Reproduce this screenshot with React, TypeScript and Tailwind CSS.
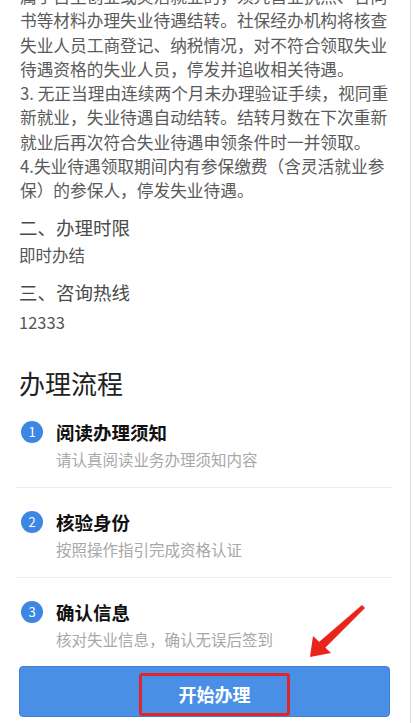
import React from "react";

const bodyLines = [
  "属于自主创业或灵活就业的，须凭营业执照、合同",
  "书等材料办理失业待遇结转。社保经办机构将核查",
  "失业人员工商登记、纳税情况，对不符合领取失业",
  "待遇资格的失业人员，停发并追收相关待遇。",
  "3. 无正当理由连续两个月未办理验证手续，视同重",
  "新就业，失业待遇自动结转。结转月数在下次重新",
  "就业后再次符合失业待遇申领条件时一并领取。",
  "4.失业待遇领取期间内有参保缴费（含灵活就业参",
  "保）的参保人，停发失业待遇。",
];

const steps = [
  { n: "1", title: "阅读办理须知", sub: "请认真阅读业务办理须知内容" },
  { n: "2", title: "核验身份", sub: "按照操作指引完成资格认证" },
  { n: "3", title: "确认信息", sub: "核对失业信息，确认无误后签到" },
];

export default function App() {
  return (
    <div
      className="relative w-[413px] h-[723px] overflow-hidden bg-white flex"
      style={{ fontFamily: '"Noto Sans CJK SC", "Noto Sans", sans-serif' }}
    >
      <div className="w-[410px] flex flex-col pl-[16px] pr-[18px]">
        <div className="-mt-[16px] pl-[4px] text-[16.7px] leading-[24.3px] text-[#5a5a5a] whitespace-nowrap">
          {bodyLines.map((l, i) => (
            <div key={i}>{l}</div>
          ))}
        </div>
        <div className="mt-[10px] pl-[3px] text-[18.5px] leading-[28px] text-[#4a4a4a]">二、办理时限</div>
        <div className="mt-[2px] pl-[3px] text-[16.5px] leading-[24px] text-[#555]">即时办结</div>
        <div className="mt-[11px] pl-[3px] text-[18.5px] leading-[28px] text-[#4a4a4a]">三、咨询热线</div>
        <div className="mt-[4px] pl-[3px] text-[16.5px] leading-[24px] text-[#555]">12333</div>
        <div className="mt-[34px] pl-[3px] text-[26px] leading-[30px] text-[#222]">办理流程</div>
        {steps.map((s, i) => (
          <div
            key={s.n}
            className={
              i < 2
                ? "flex pt-[21px] pb-[17px] border-b border-[#ececec]"
                : "flex pt-[21px] pb-[16px]"
            }
          >
            <div className="w-[40px] pl-[5px] pt-[2px]">
              <div className="w-[22px] h-[22px] rounded-full bg-[#3d87e3] flex items-center justify-center text-white text-[13px] leading-none">
                {s.n}
              </div>
            </div>
            <div className="flex flex-col gap-[3px]">
              <div className="text-[18.5px] leading-[26px] font-bold text-[#111]">{s.title}</div>
              <div className="text-[15.5px] leading-[22px] text-[#a8a8a8]">{s.sub}</div>
            </div>
          </div>
        ))}
        <div className="ml-[3px] mr-[2px] h-[51px] rounded-[4px] bg-[#4a8fe6] border border-[#3f7fd4] flex items-center">
          <div className="ml-[119px] w-[151px] h-[43px] mt-[6px] rounded-[3px] border-[3px] border-[#e0262a] flex items-center justify-center text-white text-[18px] font-bold">
            开始办理
          </div>
        </div>
      </div>
      <div className="w-[1px] bg-[#dcdcdc]" />
      <div className="flex-1" />
      <svg className="absolute left-0 top-0 pointer-events-none" width="413" height="723">
        <polygon points="362,605 365,608 325,648 319,642" fill="#e8241c" />
        <polygon points="310,657 313,636 331,653" fill="#e8241c" />
      </svg>
    </div>
  );
}
